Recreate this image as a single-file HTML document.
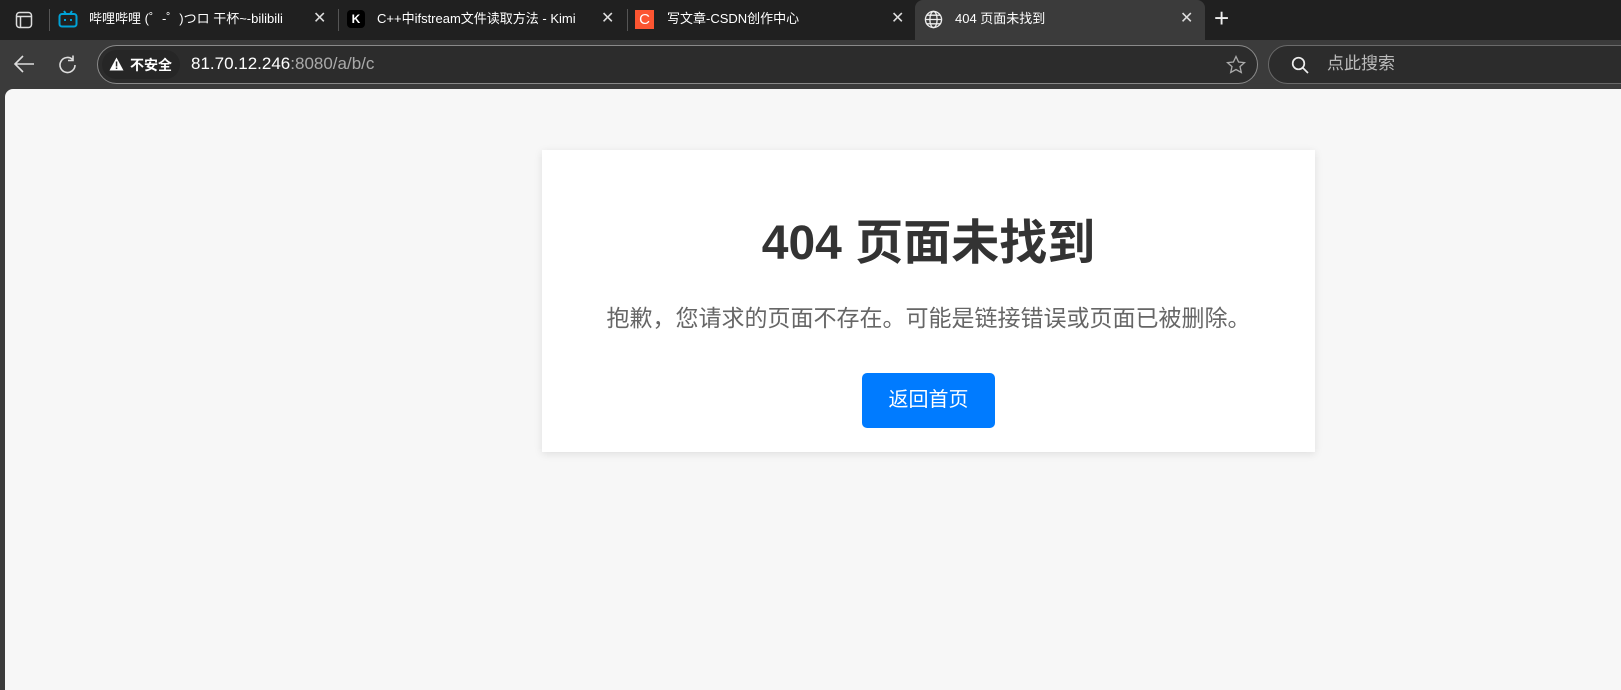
<!DOCTYPE html>
<html><head><meta charset="utf-8"><style>
*{margin:0;padding:0;box-sizing:border-box}
body{width:1621px;height:690px;overflow:hidden;background:#3b3b3b;font-family:"Liberation Sans","Noto Sans CJK SC",sans-serif;position:relative}
.tabbar{position:absolute;left:0;top:0;width:1621px;height:40px;background:#202020}
.tab{position:absolute;top:0;height:40px;color:#fff;font-size:13px;line-height:38px}
.sep{position:absolute;top:9px;width:1px;height:22px;background:#555}
.x{position:absolute;top:0;color:#ddd;font-size:16px;line-height:38px}
.active{position:absolute;left:915px;top:0;width:290px;height:41px;background:#3b3b3b;border-radius:8px 8px 0 0}
.toolbar{position:absolute;left:0;top:40px;width:1621px;height:49px;background:#3b3b3b}
.addr{position:absolute;left:97px;top:45px;width:1161px;height:39px;border:1px solid #8a8a8a;border-radius:20px;background:#2c2c2c}
.search{position:absolute;left:1268px;top:45px;width:400px;height:39px;border:1px solid #6a6a6a;border-radius:20px;background:#2c2c2c}
.content{position:absolute;left:5px;top:89px;width:1616px;height:601px;background:#f7f7f7;border-radius:8px 0 0 0}
.card{position:absolute;left:542px;top:150px;width:773px;height:302px;background:#fff;box-shadow:0 2px 8px rgba(0,0,0,.1);text-align:center}
h1{position:absolute;left:542px;width:773px;top:214px;font-size:48px;font-weight:bold;color:#333;line-height:60px;text-align:center;white-space:nowrap}
p{position:absolute;left:542px;width:773px;top:302px;font-size:23px;color:#666;line-height:32px;text-align:center;white-space:nowrap}
.btn{position:absolute;left:862px;top:373px;width:133px;height:55px;background:#007bff;border-radius:5px;color:#fff;font-size:20px;line-height:55px;text-align:center}
</style></head><body>
<div class="tabbar">
 <svg style="position:absolute;left:15px;top:11px" width="18" height="18" viewBox="0 0 18 18"><rect x="1.5" y="1.5" width="15" height="15" rx="3" fill="none" stroke="#ddd" stroke-width="1.5"/><line x1="1.5" y1="5.5" x2="16.5" y2="5.5" stroke="#ddd" stroke-width="1.5"/><line x1="5.5" y1="5.5" x2="5.5" y2="16.5" stroke="#ddd" stroke-width="1.5"/></svg>
 <div class="sep" style="left:49px"></div>
 <svg style="position:absolute;left:58px;top:10px" width="20" height="18" viewBox="0 0 20 18"><rect x="1.5" y="4" width="17" height="12.5" rx="2.5" fill="none" stroke="#00a1d6" stroke-width="2"/><line x1="6" y1="1" x2="8" y2="4" stroke="#00a1d6" stroke-width="2"/><line x1="14" y1="1" x2="12" y2="4" stroke="#00a1d6" stroke-width="2"/><line x1="7" y1="9" x2="7" y2="11" stroke="#00a1d6" stroke-width="2"/><line x1="13" y1="9" x2="13" y2="11" stroke="#00a1d6" stroke-width="2"/></svg>
 <div class="tab" style="left:89px;width:215px;overflow:hidden;white-space:nowrap">哔哩哔哩 (゜-゜)つロ 干杯~-bilibili</div>
 <div class="x" style="left:313px">✕</div>
 <div class="sep" style="left:338px"></div>
 <div style="position:absolute;left:347px;top:10px;width:18px;height:18px;background:#000;border-radius:4px;color:#fff;font-size:12px;font-weight:bold;line-height:18px;text-align:center">K</div>
 <div class="tab" style="left:377px;width:215px;overflow:hidden;white-space:nowrap">C++中ifstream文件读取方法 - Kimi</div>
 <div class="x" style="left:601px">✕</div>
 <div class="sep" style="left:627px"></div>
 <div style="position:absolute;left:635px;top:10px;width:19px;height:19px;background:#fc5531;color:#fff;font-size:15px;line-height:19px;text-align:center">C</div>
 <div class="tab" style="left:667px">写文章-CSDN创作中心</div>
 <div class="x" style="left:891px">✕</div>
 <div class="active"></div>
 <svg style="position:absolute;left:924px;top:10px" width="19" height="19" viewBox="0 0 20 20" fill="none" stroke="#eee" stroke-width="1.4"><circle cx="10" cy="10" r="8.5"/><ellipse cx="10" cy="10" rx="3.8" ry="8.5"/><line x1="1.5" y1="10" x2="18.5" y2="10"/><path d="M3 5.5h14M3 14.5h14"/></svg>
 <div class="tab" style="left:955px">404 页面未找到</div>
 <div class="x" style="left:1180px">✕</div>
 <div style="position:absolute;left:1214px;top:2px;color:#eee;font-size:26px;font-weight:200;line-height:32px">+</div>
</div>
<div class="toolbar"></div>
<svg style="position:absolute;left:13px;top:54px" width="22" height="20" viewBox="0 0 22 20" fill="none" stroke="#ddd" stroke-width="1.6"><path d="M21 10H2M10 2 2 10l8 8"/></svg>
<svg style="position:absolute;left:57px;top:54px" width="22" height="22" viewBox="0 0 22 22" fill="none" stroke="#ddd" stroke-width="1.6"><path d="M18 11a7.5 7.5 0 1 1-2.5-5.6"/><path d="M16 1.5v5h-5"/></svg>
<div class="addr"></div>
<div style="position:absolute;left:102px;top:50px;width:78px;height:29px;background:#262626;border-radius:15px"></div>
<svg style="position:absolute;left:109px;top:57px" width="15" height="14" viewBox="0 0 15 14"><path d="M7.5 0.5 14.5 13.5H0.5Z" fill="#fff"/><rect x="6.8" y="4.5" width="1.5" height="5" fill="#262626"/><rect x="6.8" y="10.5" width="1.5" height="1.5" fill="#262626"/></svg>
<div style="position:absolute;left:130px;top:54px;color:#fff;font-size:14px;font-weight:bold;line-height:22px">不安全</div>
<div style="position:absolute;left:191px;top:53px;color:#fff;font-size:17px;line-height:22px">81.70.12.246<span style="color:#aaa">:8080/a/b/c</span></div>
<svg style="position:absolute;left:1226px;top:55px" width="20" height="20" viewBox="0 0 20 20"><path d="M10 1.5 12.6 7l5.9.6-4.5 4 1.3 5.9L10 14.5l-5.3 3 1.3-5.9-4.5-4L7.4 7Z" fill="none" stroke="#aaa" stroke-width="1.3"/></svg>
<div class="search"></div>
<svg style="position:absolute;left:1291px;top:56px" width="18" height="18" viewBox="0 0 18 18" fill="none" stroke="#eee" stroke-width="1.7"><circle cx="7.5" cy="7.5" r="5.8"/><path d="M11.8 11.8 17 17"/></svg>
<div style="position:absolute;left:1327px;top:53px;color:#bbb;font-size:17px;line-height:22px">点此搜索</div>
<div class="content"></div>
<div class="card"></div>
<h1>404 页面未找到</h1>
<p>抱歉，您请求的页面不存在。可能是链接错误或页面已被删除。</p>
<div class="btn">返回首页</div>
</body></html>
